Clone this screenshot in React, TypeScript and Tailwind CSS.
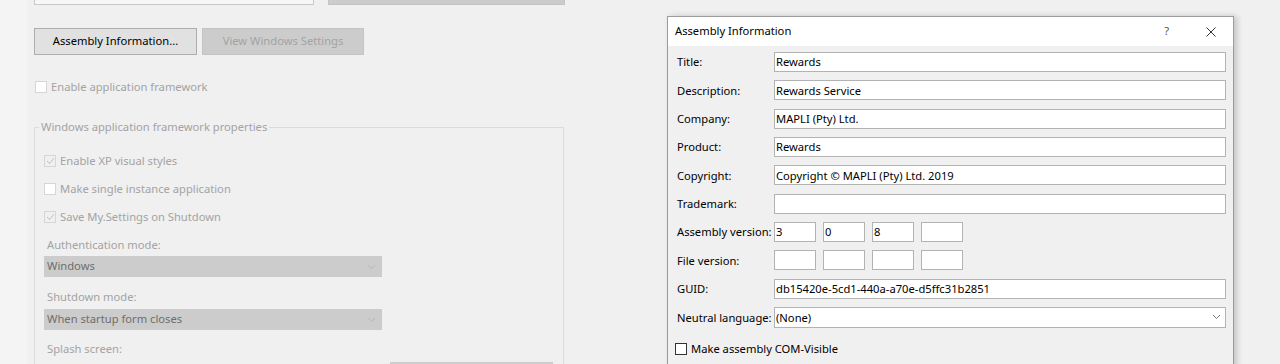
import React from "react";

const font = { fontFamily: '"Noto Sans", "Open Sans", sans-serif' };

function Chevron({ color = "#a8a8a8" }: { color?: string }) {
  return (
    <svg width="9" height="6" viewBox="0 0 9 6">
      <path d="M1 1 L4.5 4.5 L8 1" fill="none" stroke={color} strokeWidth="1" />
    </svg>
  );
}

function DisabledCheck({ checked, label }: { checked: boolean; label: string }) {
  return (
    <div className="flex items-center h-[12px]">
      <div className={`w-[12px] h-[12px] border border-[#d6d6d6] ${checked ? "bg-[#f0f0f0]" : "bg-white"} flex items-center justify-center`}>
        {checked && (
          <svg width="9" height="8" viewBox="0 0 9 8">
            <path d="M1 4 L3.5 6.5 L8 1.2" fill="none" stroke="#bdbdbd" strokeWidth="1" />
          </svg>
        )}
      </div>
      <span className="ml-[4px] text-[11.2px] text-[#a3a3a3] leading-none">{label}</span>
    </div>
  );
}

function Field({ label, value }: { label: string; value?: string }) {
  return (
    <div className="flex items-center h-[20px]">
      <div className="w-[97px] text-[11.2px] text-black leading-none">{label}</div>
      <div className="flex-1 h-[20px] bg-white border border-[#b3b3b3] flex items-center pl-[1px] text-[11.2px] text-black leading-none">
        {value}
      </div>
    </div>
  );
}

function VersionField({ label, values }: { label: string; values: string[] }) {
  return (
    <div className="flex items-center h-[20px]">
      <div className="w-[97px] text-[11.2px] text-black leading-none whitespace-nowrap">{label}</div>
      <div className="flex gap-[7px]">
        {values.map((v, i) => (
          <div key={i} className="w-[42px] h-[20px] bg-white border border-[#b3b3b3] flex items-center pl-[1px] text-[11.2px] leading-none">
            {v}
          </div>
        ))}
      </div>
    </div>
  );
}

export default function App() {
  return (
    <div className="relative w-[1280px] h-[364px] overflow-hidden bg-[#f0f0f0] flex" style={font}>
      <div className="w-[27px] h-full bg-[#f4f4f4]" />
      <div className="flex flex-col pl-[7px]">
        {/* top partial row */}
        <div className="flex items-end mt-[-20px]">
          <div className="w-[280px] h-[23px] border border-[#c9c9c9] bg-[#f7f7f7]" />
          <div className="ml-[14px] w-[237px] h-[25px] bg-[#cccccc] border border-[#c4c4c4]" />
        </div>
        {/* buttons */}
        <div className="flex mt-[23px] gap-[5px]">
          <div className="w-[163px] h-[27px] bg-[#e1e1e1] border border-[#adadad] flex items-center justify-center text-[11.2px] text-black">
            Assembly Information...
          </div>
          <div className="w-[162px] h-[27px] bg-[#cccccc] border border-[#c4c4c4] flex items-center justify-center text-[11.2px] text-[#a3a3a3]">
            View Windows Settings
          </div>
        </div>
        <div className="mt-[26px] pl-[1px]">
          <DisabledCheck checked={false} label="Enable application framework" />
        </div>
        {/* group box */}
        <div className="relative mt-[34px] w-[530px] h-[300px] border border-[#dcdcdc] border-b-0">
          <div className="absolute left-[4px] top-[-9px] px-[2px] bg-[#f0f0f0] text-[11.2px] text-[#a3a3a3] leading-[16px]">
            Windows application framework properties
          </div>
          <div className="flex flex-col pl-[9px] pt-[27px] gap-[16px]">
            <DisabledCheck checked={true} label="Enable XP visual styles" />
            <DisabledCheck checked={false} label="Make single instance application" />
            <DisabledCheck checked={true} label="Save My.Settings on Shutdown" />
          </div>
          <div className="flex flex-col pl-[9px] mt-[14px]">
            <div className="pl-[3px] text-[11.2px] text-[#a3a3a3] leading-[16px]">Authentication mode:</div>
            <div className="mt-[3px] w-[338px] h-[21px] bg-[#cccccc] flex items-center justify-between pl-[3px] pr-[6px] text-[11.2px] text-[#6e6e6e]">
              <span>Windows</span>
              <Chevron color="#b8b8b8" />
            </div>
            <div className="mt-[12px] pl-[3px] text-[11.2px] text-[#a3a3a3] leading-[16px]">Shutdown mode:</div>
            <div className="mt-[4px] w-[338px] h-[21px] bg-[#cccccc] flex items-center justify-between pl-[3px] pr-[6px] text-[11.2px] text-[#6e6e6e]">
              <span>When startup form closes</span>
              <Chevron color="#b8b8b8" />
            </div>
            <div className="mt-[11px] pl-[3px] text-[11.2px] text-[#a3a3a3] leading-[16px]">Splash screen:</div>
            <div className="mt-[5px] ml-[346px] w-[163px] h-[25px] bg-[#cccccc]" />
          </div>
        </div>
      </div>

      {/* dialog window */}
      <div className="absolute left-[667px] top-[16px] w-[567px] h-[360px] bg-[#f0f0f0] border border-[#9c9c9c] shadow-[3px_0_6px_rgba(0,0,0,0.18)] flex flex-col">
        <div className="h-[29px] bg-white flex items-center pl-[7px] text-[11.2px] text-black shrink-0">
          <span className="flex-1">Assembly Information</span>
          <span className="text-[11.2px] text-[#555] mr-[37px]">?</span>
          <svg width="10" height="10" viewBox="0 0 10 10" className="mr-[17px]">
            <path d="M0.5 0.5 L9.5 9.5 M9.5 0.5 L0.5 9.5" stroke="#333" strokeWidth="1" />
          </svg>
        </div>
        <div className="flex flex-col pl-[9px] pr-[7px] pt-[6px] gap-y-[8.34px]">
          <Field label="Title:" value="Rewards" />
          <Field label="Description:" value="Rewards Service" />
          <Field label="Company:" value="MAPLI (Pty) Ltd." />
          <Field label="Product:" value="Rewards" />
          <Field label="Copyright:" value="Copyright © MAPLI (Pty) Ltd. 2019" />
          <Field label="Trademark:" value="" />
          <VersionField label="Assembly version:" values={["3", "0", "8", ""]} />
          <VersionField label="File version:" values={["", "", "", ""]} />
          <Field label="GUID:" value="db15420e-5cd1-440a-a70e-d5ffc31b2851" />
          <div className="flex items-center h-[21px]">
            <div className="w-[97px] text-[11.2px] text-black leading-none whitespace-nowrap">Neutral language:</div>
            <div className="flex-1 h-[21px] bg-white border border-[#b3b3b3] flex items-center justify-between pl-[1px] pr-[4px] text-[11.2px] leading-none">
              <span>(None)</span>
              <Chevron color="#777" />
            </div>
          </div>
        </div>
        <div className="flex items-center pl-[7px] mt-[15px]">
          <div className="w-[12px] h-[12px] border border-[#333] bg-white" />
          <span className="ml-[4px] text-[11.2px] text-black leading-none">Make assembly COM-Visible</span>
        </div>
      </div>
    </div>
  );
}
